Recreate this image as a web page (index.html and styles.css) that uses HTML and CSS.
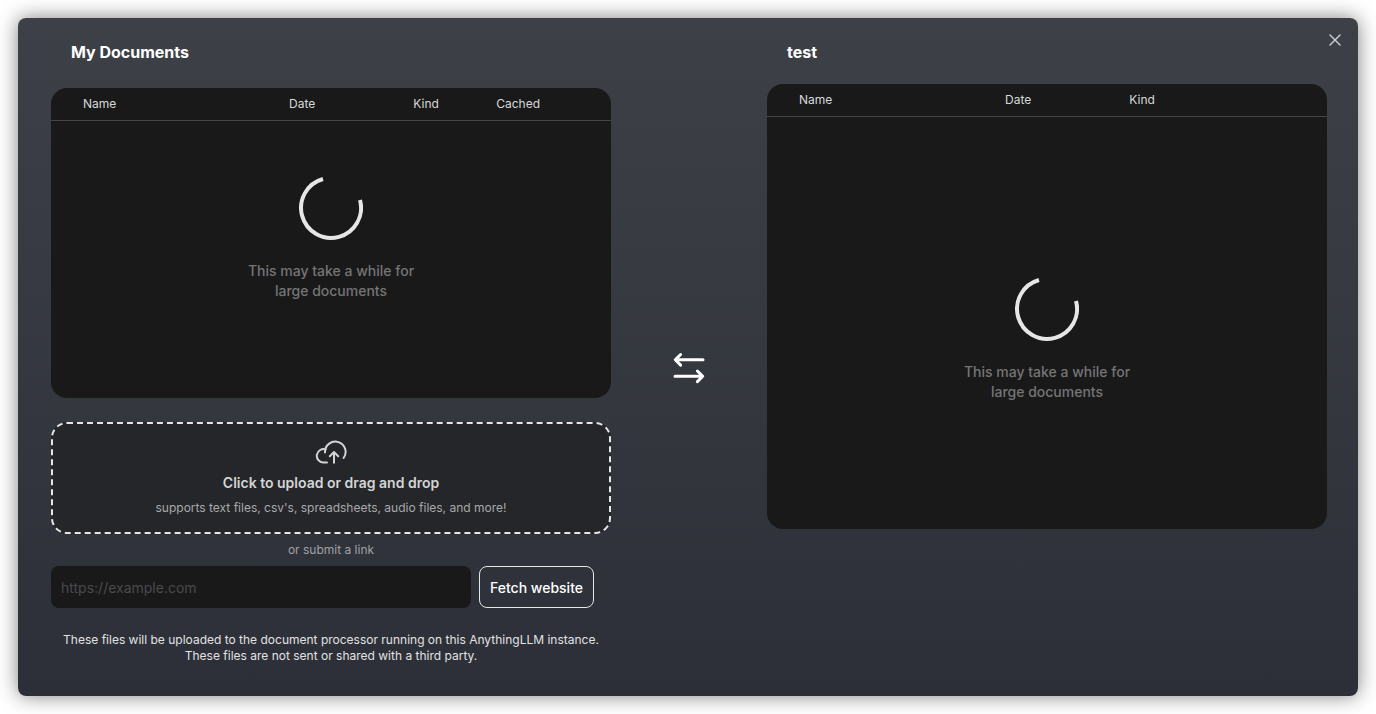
FILE: index.html
```html
<!DOCTYPE html>
<html lang="en">
<head>
<meta charset="utf-8">
<meta name="viewport" content="width=device-width, initial-scale=1">
<title>My Documents</title>
<link rel="stylesheet" href="styles.css">
</head>
<body>
<main class="modal">
  <button class="close" type="button" aria-label="Close">
    <svg width="14" height="14" viewBox="0 0 14 14"><path d="M2 2l10 10M12 2L2 12"/></svg>
  </button>
  <section class="column">
    <h2 class="title">My Documents</h2>
    <div class="panel panel-source">
      <table class="files">
        <thead>
          <tr><th class="col-name">Name</th><th class="col-date">Date</th><th class="col-kind">Kind</th><th>Cached</th></tr>
        </thead>
        <tbody>
          <tr><td colspan="4">
            <div class="loading">
              <svg class="spinner" viewBox="0 0 64 64"><path d="M24 3A30 30 0 1 0 61 24"/></svg>
              <p class="loading-text">This may take a while for large documents</p>
            </div>
          </td></tr>
        </tbody>
      </table>
    </div>
    <button class="dropzone" type="button">
      <svg class="cloud" viewBox="0 0 32 24"><path d="M12 22.500H8.500A6.700 6.700 0 1 1 10.800 9.500M10 12.500V12A10.300 10.300 0 1 1 28.600 18M19 22.800V12.500M14.800 16.200L19 12L23.200 16.200"/></svg>
      <span class="drop-title">Click to upload or drag and drop</span>
      <span class="drop-hint">supports text files, csv's, spreadsheets, audio files, and more!</span>
    </button>
    <label class="link-label" for="link">or submit a link</label>
    <form class="link-form">
      <input class="link-input" id="link" type="url" placeholder="https://example.com">
      <button class="fetch" type="button">Fetch website</button>
    </form>
    <p class="note">These files will be uploaded to the document processor running on this AnythingLLM instance.<br>These files are not sent or shared with a third party.</p>
  </section>
  <div class="swap">
    <svg width="32" height="32" viewBox="0 0 32 32"><path d="M30 7.800H3M7.600 2.500L2.300 7.800L7.600 13.100M2 24.300H29M24.400 19L29.700 24.300L24.400 29.600"/></svg>
  </div>
  <section class="column">
    <h2 class="title">test</h2>
    <div class="panel panel-workspace">
      <table class="files">
        <thead>
          <tr><th class="col-name">Name</th><th class="col-date">Date</th><th class="col-kind">Kind</th><th></th></tr>
        </thead>
        <tbody>
          <tr><td colspan="4">
            <div class="loading">
              <svg class="spinner" viewBox="0 0 64 64"><path d="M24 3A30 30 0 1 0 61 24"/></svg>
              <p class="loading-text">This may take a while for large documents</p>
            </div>
          </td></tr>
        </tbody>
      </table>
    </div>
  </section>
</main>
</body>
</html>
```

FILE: styles.css
```css
* { box-sizing: border-box; }
body {
  margin: 0;
  padding: 18px;
  background: #fff;
  color: #fff;
  font-family: Inter, "Liberation Sans", sans-serif;
}
button, input { font-family: inherit; }
h2, p { margin: 0; }
svg { fill: none; stroke: currentColor; stroke-linecap: round; stroke-linejoin: round; }
.modal {
  position: relative;
  display: grid;
  grid-template-columns: 560fr 156fr 560fr;
  min-height: calc(100vh - 36px);
  padding: 22px 31px 0 33px;
  border-radius: 8px;
  background: linear-gradient(180deg, #3d4147 0%, #2c2f37 100%);
  box-shadow: 0 0 20px rgba(0, 0, 0, 0.5);
}
.close {
  position: absolute;
  top: 11px;
  right: 12px;
  display: flex;
  padding: 4px;
  border: 0;
  background: none;
  color: #d0d1d3;
  stroke-width: 1.4;
}
.column { display: flex; flex-direction: column; min-width: 0; }
.title {
  padding-left: 20px;
  font-size: 16px;
  font-weight: 700;
  line-height: 24px;
}
.panel {
  overflow: hidden;
  border-radius: 16px;
  background: #19191a;
}
.panel-source { min-height: 310px; margin-top: 24px; --lead: 55px; }
.panel-workspace { min-height: 445px; margin-top: 20px; --lead: 160px; }
.files { width: 100%; table-layout: fixed; border-collapse: collapse; }
.files th {
  padding: 8px 0;
  border-bottom: 1px solid #464647;
  color: #d8d8d9;
  font-size: 12px;
  font-weight: 400;
  line-height: 16px;
  text-align: left;
}
.files .col-name { width: 42.5%; padding-left: 32px; }
.files .col-date { width: 22.2%; }
.files .col-kind { width: 14.8%; }
.files td { padding: 0; }
.loading {
  display: flex;
  flex-direction: column;
  align-items: center;
  gap: 21px;
  padding-top: var(--lead);
}
.spinner { width: 64px; height: 64px; color: #e6e6e7; stroke-width: 4; stroke-linecap: butt; }
.loading-text {
  max-width: 180px;
  color: #757576;
  font-size: 14px;
  font-weight: 500;
  line-height: 20px;
  text-align: center;
}
.dropzone {
  display: flex;
  flex-direction: column;
  align-items: center;
  margin-top: 24px;
  padding: 16px;
  border: 2px dashed #e6e6e7;
  border-radius: 16px;
  background: #252629;
}
.cloud { width: 32px; height: 24px; color: #d3d4d4; stroke-width: 2; }
.drop-title {
  margin-top: 9px;
  color: #d3d4d4;
  font-size: 14px;
  font-weight: 600;
  line-height: 20px;
}
.drop-hint {
  margin-top: 7px;
  color: #a8a9aa;
  font-size: 12px;
  font-weight: 400;
  line-height: 16px;
}
.link-label {
  margin: 8px 0;
  color: #a0a1a5;
  font-size: 12px;
  font-weight: 400;
  line-height: 16px;
  text-align: center;
}
.link-form { display: flex; gap: 8px; }
.link-input {
  width: 75%;
  height: 42px;
  padding: 10px;
  border: 0;
  border-radius: 8px;
  background: #19191a;
  color: #fff;
  font-size: 14px;
}
.link-input::placeholder { color: #4a4a4b; }
.fetch {
  height: 42px;
  padding: 0 10px;
  border: 1px solid #e6e6e7;
  border-radius: 8px;
  background: none;
  color: #fff;
  font-size: 14px;
  font-weight: 500;
  white-space: nowrap;
}
.note {
  margin: 24px 0 32px;
  color: #e2e2e4;
  font-size: 12px;
  font-weight: 400;
  line-height: 16px;
  text-align: center;
}
.swap { display: flex; align-items: center; justify-content: center; stroke-width: 3; }
```
